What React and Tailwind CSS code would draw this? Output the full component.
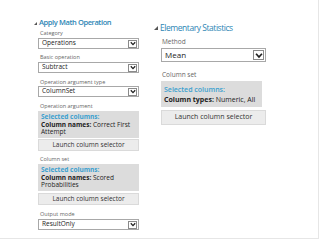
import React from "react";

const F = { fontFamily: '"Open Sans", "Noto Sans", sans-serif' };

function Chevron({ s = 9 }) {
  return (
    <div className="flex items-center justify-center border border-[#8a8a8a] bg-white" style={{ width: s, height: s - 1 }}>
      <svg width={s - 3} height={s - 4} viewBox="0 0 6 5">
        <path d="M0.8 1.2 L3 3.6 L5.2 1.2" fill="none" stroke="#222" strokeWidth="1.3" />
      </svg>
    </div>
  );
}

function Tri({ s = 4 }) {
  return (
    <svg width={s} height={s} viewBox="0 0 4 4" className="shrink-0">
      <path d="M4 0 L4 4 L0 4 Z" fill="#555" />
    </svg>
  );
}

function LDrop({ text }) {
  return (
    <div className="h-[11px] border border-[#a8a8a8] flex items-center justify-between pl-[3px] pr-[1px] bg-white">
      <span className="text-[6.5px] leading-none text-[#222]">{text}</span>
      <Chevron s={9} />
    </div>
  );
}

function LLabel({ children, cls }) {
  return <div className={`h-[8px] text-[5.5px] leading-[8px] text-[#666] pl-[2px] ${cls}`}>{children}</div>;
}

function LBox({ l2, l3 }) {
  return (
    <div className="bg-[#dcdcdc] h-[27px] pl-[3px] pt-[2px] text-[6.5px] leading-[7.5px]">
      <div className="font-bold text-[#3aa0cf]">Selected columns:</div>
      <div className="text-[#222]"><span className="font-bold">Column names:</span> {l2}</div>
      <div className="text-[#222]">{l3}</div>
    </div>
  );
}

function LBtn({ cls }) {
  return (
    <div className={`h-[12px] bg-[#ececec] border border-[#dadada] flex items-center justify-center text-[6.5px] text-[#333] ${cls}`}>
      Launch column selector
    </div>
  );
}

export default function App() {
  return (
    <div className="w-[319px] h-[239px] bg-white flex border-r border-b border-[#e6e6e6]" style={F}>
      <div className="ml-[34px] w-[105px] flex flex-col pt-[18px]">
        <div className="h-[10px] flex items-center gap-[2px]">
          <Tri s={3} />
          <span className="text-[7.5px] font-semibold text-[#2e86b5] leading-none tracking-[-0.4px]">Apply Math Operation</span>
        </div>
        <div className="pl-[4px] flex flex-col">
          <LLabel cls="mt-[1px]">Category</LLabel>
          <div className="mt-[1px]"><LDrop text="Operations" /></div>
          <LLabel cls="mt-[4px]">Basic operation</LLabel>
          <div className="mt-[1px]"><LDrop text="Subtract" /></div>
          <LLabel cls="mt-[5px]">Operation argument type</LLabel>
          <div className="mt-[0px]"><LDrop text="ColumnSet" /></div>
          <LLabel cls="mt-[5px]">Operation argument</LLabel>
          <div className="mt-[1px]"><LBox l2="Correct First" l3="Attempt" /></div>
          <LBtn cls="mt-[1px]" />
          <LLabel cls="mt-[4px]">Column set</LLabel>
          <div className="mt-[1px]"><LBox l2="Scored" l3="Probabilities" /></div>
          <LBtn cls="mt-[2px]" />
          <LLabel cls="mt-[5px]">Output mode</LLabel>
          <div className="mt-[1px]"><LDrop text="ResultOnly" /></div>
        </div>
      </div>
      <div className="ml-[15px] w-[112px] flex flex-col pt-[22px]">
        <div className="h-[12px] flex items-center gap-[2px]">
          <Tri s={4} />
          <span className="text-[8.5px] font-normal text-[#2e86b5] leading-none tracking-[-0.45px]">Elementary Statistics</span>
        </div>
        <div className="pl-[7px] flex flex-col">
          <div className="mt-[3px] h-[9px] text-[6.5px] leading-[9px] text-[#666] pl-[1px]">Method</div>
          <div className="mt-[2px] h-[14px] w-[105px] border border-[#a8a8a8] flex items-center justify-between pl-[3px] pr-[1px]">
            <span className="text-[8px] leading-none text-[#222]">Mean</span>
            <Chevron s={11} />
          </div>
          <div className="mt-[8px] h-[9px] text-[6.5px] leading-[9px] text-[#666] pl-[1px]">Column set</div>
          <div className="mt-[2px] h-[26px] w-[101px] bg-[#dcdcdc] pl-[3px] pt-[4px] text-[7px] leading-[10px]">
            <div className="font-semibold text-[#3aa0cf]">Selected columns:</div>
            <div className="text-[#222]"><span className="font-bold">Column types:</span> Numeric, All</div>
          </div>
          <div className="mt-[3px] h-[15px] w-[105px] bg-[#ececec] border border-[#dadada] flex items-center justify-center text-[7px] text-[#333]">
            Launch column selector
          </div>
        </div>
      </div>
    </div>
  );
}
